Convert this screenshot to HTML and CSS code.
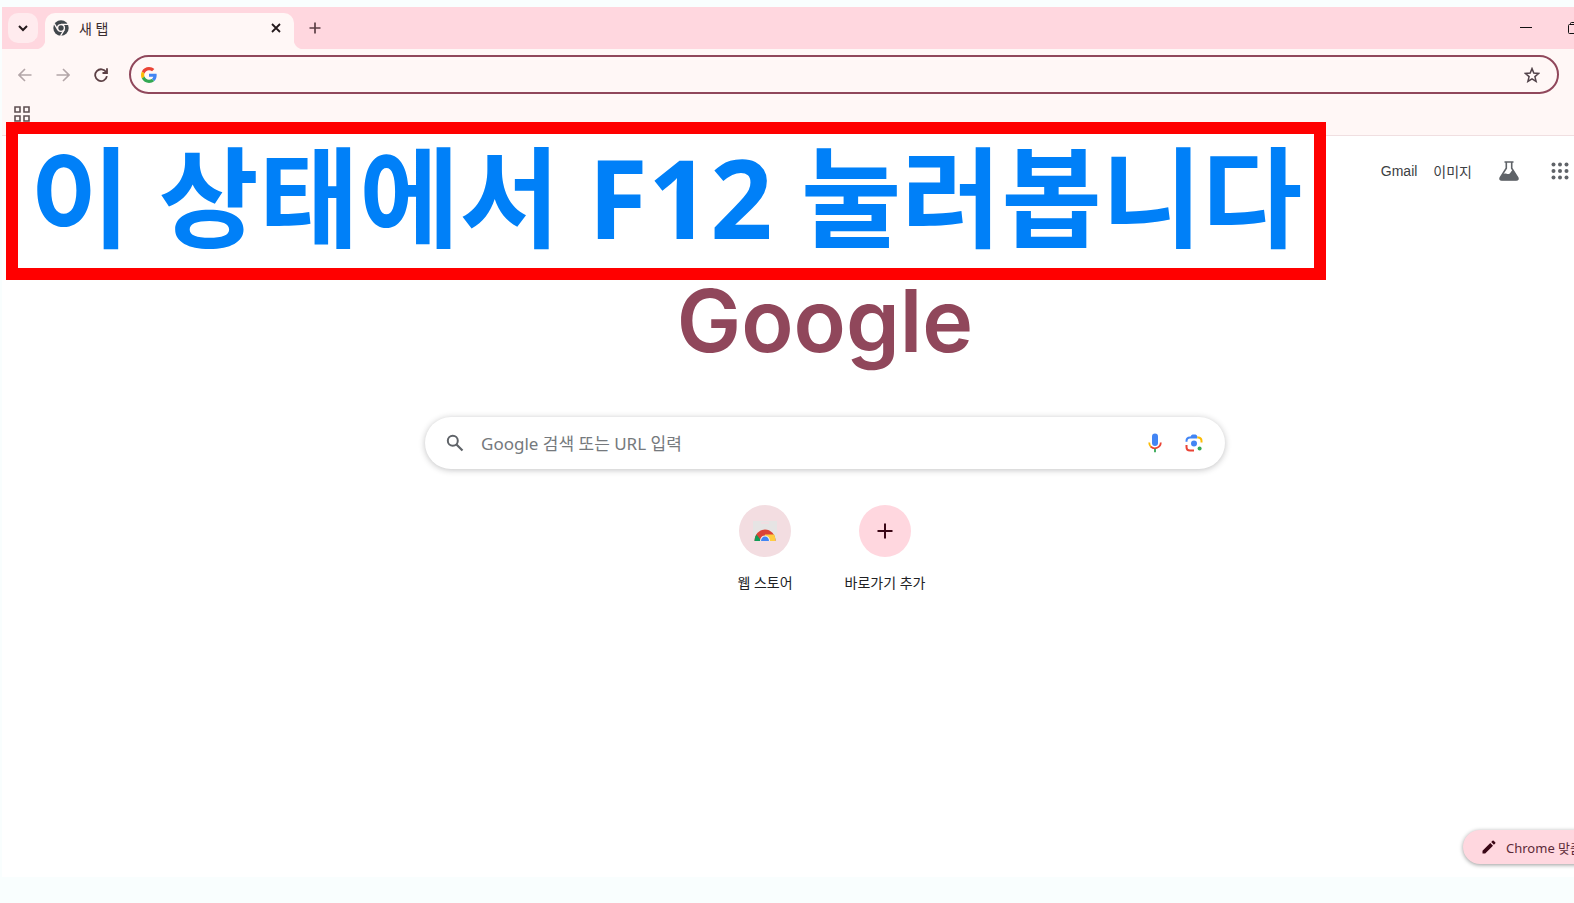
FILE: index.html
```html
<!doctype html>
<html lang="ko">
<head>
  <meta charset="utf-8">
  <title>새 탭</title>
  <link rel="stylesheet" href="styles.css">
</head>
<body>
<div class="browser">
  <header class="tabstrip">
    <button class="tab-search" aria-label="탭 검색">
      <svg width="12" height="12" viewBox="0 0 12 12"><path d="M2 4l4 4 4-4" fill="none" stroke="#24191b" stroke-width="2"/></svg>
    </button>
    <div class="tab">
      <svg width="16" height="16" viewBox="0 0 16 16">
        <circle cx="8" cy="8" r="7.7" fill="#41474c"/>
        <circle cx="8" cy="8" r="3.4" fill="#41474c" stroke="#fff7f6" stroke-width="1.4"/>
        <path d="M8 4.4h7.2M4.9 9.8L1.3 3.7M11.1 9.8L7.6 15.8" stroke="#fff7f6" stroke-width="1.4"/>
      </svg>
      <span class="tab-title">새 탭</span>
      <button class="tab-close" aria-label="닫기">
        <svg width="10" height="10" viewBox="0 0 10 10"><path d="M1 1l8 8M9 1L1 9" stroke="#24191b" stroke-width="1.8"/></svg>
      </button>
    </div>
    <button class="tab-new" aria-label="새 탭">
      <svg width="12" height="12" viewBox="0 0 12 12"><path d="M6 .5v11M.5 6h11" stroke="#5c3f45" stroke-width="1.7"/></svg>
    </button>
    <div class="window-controls">
      <button aria-label="최소화">
        <svg width="12" height="12" viewBox="0 0 12 12"><path d="M0 5.5h12" stroke="#111"/></svg>
      </button>
      <button aria-label="이전 크기로">
        <svg width="12" height="12" viewBox="0 0 12 12" fill="none" stroke="#111"><rect x=".5" y="2.5" width="9" height="9" rx="1"/><path d="M2.5 2.5v-1q0-1 1-1h6q2 0 2 2v6q0 1-1 1h-1"/></svg>
      </button>
    </div>
  </header>

  <div class="toolbar">
    <div class="nav">
      <button aria-label="뒤로">
        <svg width="14" height="14" viewBox="0 0 14 14" fill="none" stroke="#b3a6a8" stroke-width="1.6"><path d="M13.5 7H1.5M7 1L1 7l6 6"/></svg>
      </button>
      <button aria-label="앞으로">
        <svg width="14" height="14" viewBox="0 0 14 14" fill="none" stroke="#b3a6a8" stroke-width="1.6"><path d="M.5 7h12M7 1l6 6-6 6"/></svg>
      </button>
      <button aria-label="새로고침">
        <svg width="14" height="14" viewBox="0 0 14 14" fill="none" stroke="#5c4045" stroke-width="1.8"><path d="M12.9 8.200A5.900 5.900 0 1 1 12.200 4.200M13 .3v4.700H8.500"/></svg>
      </button>
    </div>
    <div class="omnibox">
      <svg width="16" height="16" viewBox="0 0 48 48">
        <path fill="#ea4335" d="M24 9.5c3.54 0 6.71 1.22 9.21 3.6l6.85-6.85C35.9 2.38 30.47 0 24 0 14.62 0 6.51 5.38 2.56 13.22l7.98 6.19C12.43 13.72 17.74 9.5 24 9.5z"/>
        <path fill="#4285f4" d="M46.98 24.55c0-1.57-.15-3.09-.38-4.55H24v9.02h12.94c-.58 2.96-2.26 5.48-4.78 7.18l7.73 6c4.51-4.18 7.09-10.36 7.09-17.65z"/>
        <path fill="#fbbc05" d="M10.53 28.59c-.48-1.45-.76-2.99-.76-4.59s.27-3.14.76-4.59l-7.98-6.19C.92 16.46 0 20.12 0 24c0 3.88.92 7.54 2.56 10.78l7.97-6.19z"/>
        <path fill="#34a853" d="M24 48c6.48 0 11.93-2.13 15.89-5.81l-7.73-6c-2.15 1.45-4.92 2.3-8.16 2.3-6.26 0-11.57-4.22-13.47-9.91l-7.98 6.19C6.51 42.62 14.62 48 24 48z"/>
      </svg>
      <input type="text" aria-label="주소창">
      <button aria-label="북마크">
        <svg width="16" height="16" viewBox="0 0 16 16"><path d="M8 1.6l1.8 4.5 4.8.4-3.7 3.1 1.2 4.8L8 11.8l-4.1 2.6 1.2-4.8L1.4 6.5l4.8-.4z" fill="none" stroke="#52434a" stroke-width="1.5"/></svg>
      </button>
    </div>
  </div>

  <div class="bookmarks">
    <button aria-label="앱">
      <svg width="16" height="16" viewBox="0 0 16 16" fill="none" stroke="#5f5053" stroke-width="1.6"><path d="M1 1h5v5H1zM10 1h5v5h-5zM1 10h5v5H1zM10 10h5v5h-5z"/></svg>
    </button>
  </div>

  <main class="page">
    <nav class="links">
      <a href="#">Gmail</a>
      <a href="#">이미지</a>
      <a class="labs" href="#" aria-label="실험실">
        <svg width="20" height="20" viewBox="0 0 20 20"><path d="M5.500 1h9M7.300 1v6.300L1.300 16.600Q.4 18.900 2.600 18.900h14.800q2.200 0 1.300-2.300L12.700 7.300V1" fill="none" stroke="#5f6368" stroke-width="1.600"/><path d="M3.500 13.500c3.500-2.500 4.500.7 7-.8 1.500-.9 1.500-2.700 3.500-3.900L19 17q.3 2.200-2 2.200H3Q.6 19.200 1.200 17z" fill="#5f6368"/></svg>
      </a>
      <a class="apps" href="#" aria-label="Google 앱">
        <svg width="18" height="18" viewBox="0 0 18 18" fill="#5f6368"><circle cx="2.5" cy="2.5" r="2"/><circle cx="9" cy="2.5" r="2"/><circle cx="15.5" cy="2.5" r="2"/><circle cx="2.5" cy="9" r="2"/><circle cx="9" cy="9" r="2"/><circle cx="15.5" cy="9" r="2"/><circle cx="2.5" cy="15.5" r="2"/><circle cx="9" cy="15.5" r="2"/><circle cx="15.5" cy="15.5" r="2"/></svg>
      </a>
    </nav>

    <h1 class="logo">Google</h1>

    <form class="search">
      <svg width="18" height="18" viewBox="0 0 18 18" fill="none" stroke="#5f6368"><circle cx="6.8" cy="6.8" r="5" stroke-width="2"/><path d="M10.5 10.5l6 6" stroke-width="2.2"/></svg>
      <input type="text" aria-label="검색" placeholder="Google 검색 또는 URL 입력">
      <button type="button" aria-label="음성 검색">
        <svg width="20" height="20" viewBox="0 0 20 20" fill="none" stroke-width="1.8">
          <rect x="7" y="0.5" width="6" height="12.5" rx="3" fill="#4285f4"/>
          <path d="M4.2 9.5a6 6 0 0 0 1.9 4.5" stroke="#fbbc04"/>
          <path d="M5.8 13.7a6 6 0 0 0 10-4.2" stroke="#ea4335"/>
          <path d="M10 15.8v3.5" stroke="#34a853"/>
        </svg>
      </button>
      <button type="button" aria-label="이미지 검색">
        <svg width="20" height="20" viewBox="0 0 20 20" fill="none" stroke-width="2">
          <path d="M2.5 8.8V8q0-3.5 3.5-3.5h7" stroke="#4285f4"/>
          <path d="M6.5 4q.5-2.5 2-2.5h3q1.5 0 2 2.5z" fill="#4285f4"/>
          <path d="M13.2 4.5h.8q3.5 0 3.5 3.5v1.6" stroke="#fbbc04"/>
          <path d="M2.5 12v2q0 3.5 3.5 3.5h4" stroke="#ea4335"/>
          <circle cx="10" cy="10.5" r="3" fill="#4285f4"/>
          <circle cx="15.6" cy="15.6" r="2" fill="#34a853"/>
        </svg>
      </button>
    </form>

    <div class="shortcuts">
      <a class="shortcut" href="#">
        <span class="shortcut-icon store">
          <svg width="24" height="24" viewBox="0 0 24 24">
            <path d="M0 2h24v18q0 2-2 2H2q-2 0-2-2z" fill="#e6e4e4"/>
            <path d="M8 4h8" stroke="#f3dde1" stroke-width="1.6"/>
            <path d="M1.5 22a10.5 11.5 0 0 1 21 0z" fill="#db4437"/>
            <path d="M1.5 22q0-4 2-6.500L8.500 22z" fill="#0f9d58"/>
            <path d="M12 15.600h9.200q1.300 2.500 1.300 6.400H12z" fill="#ffcd40"/>
            <path d="M7 22a5 5.5 0 0 1 10 0z" fill="#f1f1f1"/>
            <path d="M8 22a4 4.5 0 0 1 8 0z" fill="#4285f4"/>
          </svg>
        </span>
        <span>웹 스토어</span>
      </a>
      <a class="shortcut" href="#">
        <span class="shortcut-icon">
          <svg width="16" height="16" viewBox="0 0 16 16"><path d="M8 .5v15M.5 8h15" stroke="#3b0716" stroke-width="2"/></svg>
        </span>
        <span>바로가기 추가</span>
      </a>
    </div>

    <button class="customize">
      <svg width="14" height="14" viewBox="0 0 14 14" fill="#3b0716"><path d="M.5 10.8v2.7h2.7l7.8-7.8L8.3 3zM9.2 2.1l1.300-1.300q.6-.6 1.200 0l1.500 1.500q.6.6 0 1.200l-1.300 1.300z"/></svg>
      <span>Chrome 맞춤설정</span>
    </button>
  </main>
</div>

<p class="callout">이 상태에서 F12 눌러봅니다</p>
</body>
</html>
```

FILE: styles.css
```css
:root {
  --pink: #ffd7df;
  --surface: #fff7f6;
  --accent: #90475b;
  --grey: #75797d;
}
* {
  box-sizing: border-box;
  margin: 0;
  padding: 0;
}
body {
  position: relative;
  min-height: 100vh;
  padding: 7px 0 26px 2px;
  display: flex;
  overflow: hidden;
  background: #f9fefe;
  font-family: "Noto Sans", "Noto Sans CJK KR", sans-serif;
  font-size: 13px;
}
button {
  border: none;
  background: none;
  font: inherit;
  display: flex;
  align-items: center;
  justify-content: center;
  cursor: pointer;
}
a {
  color: inherit;
  text-decoration: none;
}
svg {
  display: block;
  flex: none;
}
input {
  flex: 1;
  min-width: 0;
  border: none;
  outline: none;
  background: none;
  font: inherit;
}

/* the window runs past the right edge of the screen */
.browser {
  flex: none;
  width: calc(100% + 74px);
  display: flex;
  flex-direction: column;
  background: #fff;
}

/* tabs */
.tabstrip {
  height: 42px;
  padding: 6px 0 0 6px;
  display: flex;
  background: var(--pink);
}
.tab-search {
  width: 30px;
  height: 30px;
  border-radius: 10px;
  background: #ffebee;
}
.tab {
  position: relative;
  width: 249px;
  margin-left: 7px;
  padding: 0 13px 6px 8px;
  display: flex;
  align-items: center;
  gap: 10px;
  border-radius: 10px 10px 0 0;
  background: var(--surface);
}
.tab::before,
.tab::after {
  content: "";
  position: absolute;
  bottom: 0;
  width: 10px;
  height: 10px;
}
.tab::before {
  right: 100%;
  background: radial-gradient(circle at 0 0, var(--pink) 10px, var(--surface) 11px);
}
.tab::after {
  left: 100%;
  background: radial-gradient(circle at 100% 0, var(--pink) 10px, var(--surface) 11px);
}
.tab-title {
  flex: 1;
  color: #3a2c2f;
  font-size: 14px;
}
.tab-new {
  width: 28px;
  height: 30px;
  margin-left: 7px;
}
.window-controls {
  margin-left: auto;
  margin-right: 50px;
  display: flex;
}
.window-controls button {
  width: 48px;
  height: 30px;
}

/* toolbar */
.toolbar {
  height: 50px;
  padding: 6px 89px 5px 4px;
  display: flex;
  background: var(--surface);
}
.nav {
  display: flex;
}
.nav button {
  width: 38px;
}
.omnibox {
  flex: 1;
  margin-left: 9px;
  padding: 0 17px 0 10px;
  display: flex;
  align-items: center;
  gap: 8px;
  border: 2px solid var(--accent);
  border-radius: 20px;
}
.bookmarks {
  height: 37px;
  padding: 7px 12px;
  display: flex;
  align-items: flex-start;
  background: var(--surface);
  border-bottom: 1px solid #f0dfe1;
}

/* new tab page */
.page {
  position: relative;
  flex: 1;
  display: flex;
  flex-direction: column;
  align-items: center;
}
.links {
  align-self: stretch;
  height: 69px;
  padding-right: 79px;
  display: flex;
  align-items: center;
  justify-content: flex-end;
  gap: 16px;
  color: #3c4043;
  font-family: "Liberation Sans", "Noto Sans CJK KR", sans-serif;
  font-size: 14px;
}
.labs {
  margin-left: 11px;
}
.apps {
  margin-left: 16px;
}
.logo {
  height: 112px;
  margin-top: 62px;
  line-height: 108px;
  color: var(--accent);
  font-family: Inter, sans-serif;
  font-size: 86px;
  font-weight: 600;
}
.search {
  width: 800px;
  height: 52px;
  margin-top: 38px;
  padding: 0 21px;
  display: flex;
  align-items: center;
  border-radius: 26px;
  background: #fff;
  box-shadow: 0 1px 6px rgba(32,33,36,0.28);
}
.search input {
  margin-left: 17px;
  font-size: 17px;
}
.search input::placeholder {
  color: var(--grey);
  opacity: 1;
}
.search button {
  margin-left: 19px;
}
.shortcuts {
  margin-top: 36px;
  display: flex;
}
.shortcut {
  width: 120px;
  display: flex;
  flex-direction: column;
  align-items: center;
  gap: 16px;
  color: #202124;
  font-size: 14px;
  line-height: 20px;
}
.shortcut-icon {
  width: 52px;
  height: 52px;
  display: flex;
  align-items: center;
  justify-content: center;
  border-radius: 50%;
  background: var(--pink);
}
.store {
  background: #f3dde1;
}
.customize {
  position: absolute;
  right: 16px;
  bottom: 13px;
  width: 169px;
  height: 34px;
  padding-left: 19px;
  justify-content: flex-start;
  gap: 10px;
  border-radius: 17px;
  background: var(--pink);
  color: #5c2a38;
  box-shadow: 0 1px 4px rgba(0,0,0,0.4);
  white-space: nowrap;
}

/* note laid over the window */
.callout {
  position: absolute;
  top: 122px;
  left: 6px;
  height: 158px;
  padding: 0 12px;
  border: 12px solid #f00;
  background: #fff;
  color: #0080f8;
  font-size: 109px;
  font-weight: 700;
  line-height: 126px;
  white-space: nowrap;
}
```
